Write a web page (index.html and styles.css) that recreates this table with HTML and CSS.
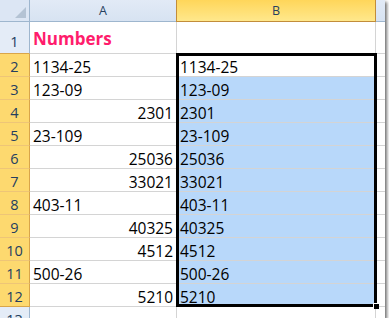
FILE: index.html
```html
<!DOCTYPE html>
<html lang="en">
<head>
    <meta charset="UTF-8">
    <title>Numbers - Sheet1</title>
    <link rel="stylesheet" href="styles.css">
</head>
<body>
    <div class="sheet">
        <div class="grid">
            <!-- column headers -->
            <div class="corner"><span class="corner-tri"></span></div>
            <div class="col-head">A</div>
            <div class="col-head sel">B</div>
            <div class="col-head edge"></div>

            <div class="row-head tall">1</div>
            <div class="cell tall title">Numbers</div>
            <div class="cell tall"></div>
            <div class="cell tall"></div>

            <div class="row-head sel">2</div>
            <div class="cell">1134-25</div>
            <div class="cell active">1134-25</div>
            <div class="cell"></div>

            <div class="row-head sel">3</div>
            <div class="cell">123-09</div>
            <div class="cell hl">123-09</div>
            <div class="cell"></div>

            <div class="row-head sel">4</div>
            <div class="cell num">2301</div>
            <div class="cell hl">2301</div>
            <div class="cell"></div>

            <div class="row-head sel">5</div>
            <div class="cell">23-109</div>
            <div class="cell hl">23-109</div>
            <div class="cell"></div>

            <div class="row-head sel">6</div>
            <div class="cell num">25036</div>
            <div class="cell hl">25036</div>
            <div class="cell"></div>

            <div class="row-head sel">7</div>
            <div class="cell num">33021</div>
            <div class="cell hl">33021</div>
            <div class="cell"></div>

            <div class="row-head sel">8</div>
            <div class="cell">403-11</div>
            <div class="cell hl">403-11</div>
            <div class="cell"></div>

            <div class="row-head sel">9</div>
            <div class="cell num">40325</div>
            <div class="cell hl">40325</div>
            <div class="cell"></div>

            <div class="row-head sel">10</div>
            <div class="cell num">4512</div>
            <div class="cell hl">4512</div>
            <div class="cell"></div>

            <div class="row-head sel">11</div>
            <div class="cell">500-26</div>
            <div class="cell hl">500-26</div>
            <div class="cell"></div>

            <div class="row-head sel">12</div>
            <div class="cell num">5210</div>
            <div class="cell hl">5210</div>
            <div class="cell"></div>

            <div class="row-head">13</div>
            <div class="cell"></div>
            <div class="cell"></div>
            <div class="cell"></div>
        </div>

        <!-- selection frame B2:B12 -->
        <div class="selection">
            <span class="handle"></span>
        </div>
    </div>
</body>
</html>
```

FILE: styles.css
```css
body {
    margin: 0;
    background: #ffffff;
    font-family: 'Open Sans', 'Liberation Sans', sans-serif;
}

.sheet {
    position: relative;
    width: 385px;
    height: 318px;
    overflow: hidden;
    background: #ffffff;
    box-shadow: 2px 2px 3px rgba(0,0,0,0.55);
}

.grid {
    display: grid;
    grid-template-columns: 30px 147px 199px 10px;
    grid-template-rows: 22px 32px repeat(11, 23px) 23px;
}

.grid > div {
    box-sizing: border-box;
    border-right: 1px solid #d4d4d4;
    border-bottom: 1px solid #d4d4d4;
}

/* headers */
.corner {
    position: relative;
    background: #dce6f4;
    border-right-color: #9eb6ce !important;
    border-bottom-color: #9eb6ce !important;
}

.corner-tri {
    position: absolute;
    right: 3px;
    bottom: 3px;
    width: 0;
    height: 0;
    border-left: 11px solid transparent;
    border-bottom: 11px solid #b4c3d4;
}

.col-head {
    display: flex;
    align-items: center;
    justify-content: center;
    font-size: 12.5px;
    color: #27415f;
    background: linear-gradient(#e2eaf6, #d7e3f2);
    border-right-color: #9eb6ce !important;
    border-bottom-color: #9eb6ce !important;
}

.col-head.sel {
    background: linear-gradient(#ffd65a, #ffe88c);
    border-bottom-color: #c28d3a !important;
    border-right-color: #c28d3a !important;
    margin-left: -1px;
    border-left: 1px solid #c28d3a;
}

.row-head {
    display: flex;
    align-items: flex-end;
    justify-content: center;
    font-size: 14.5px;
    line-height: 18px;
    color: #243e60;
    background: #e4ecf7;
    border-right-color: #9eb6ce !important;
    border-bottom-color: #c5d3e3 !important;
}

.row-head.sel {
    background: #fdd96f;
    border-right-color: #d9a54a !important;
    border-bottom-color: #eec577 !important;
}

.row-head.tall {
    border-bottom-color: #d9a54a !important;
    padding-bottom: 2px;
}

.row-head.sel:nth-child(49) {
    border-bottom-color: #d9a54a !important;
}

/* cells */
.cell {
    display: flex;
    align-items: flex-end;
    padding: 0 3px 0 3px;
    font-size: 15.5px;
    line-height: 18px;
    color: #000000;
    white-space: nowrap;
    overflow: hidden;
}

.cell.num {
    justify-content: flex-end;
}

.cell.hl {
    background: #b8d8fa;
}

.cell.title {
    padding-bottom: 3px;
    font-size: 17px;
    line-height: 22px;
    font-weight: bold;
    color: #ff1c6c;
}

/* selection frame */
.selection {
    position: absolute;
    left: 176px;
    top: 53px;
    width: 201px;
    height: 254px;
    box-sizing: border-box;
    border: 3px solid #000000;
    pointer-events: none;
}

.handle {
    position: absolute;
    right: -5px;
    bottom: -5px;
    width: 5px;
    height: 5px;
    background: #000000;
    border-left: 1px solid #ffffff;
    border-top: 1px solid #ffffff;
}
```
